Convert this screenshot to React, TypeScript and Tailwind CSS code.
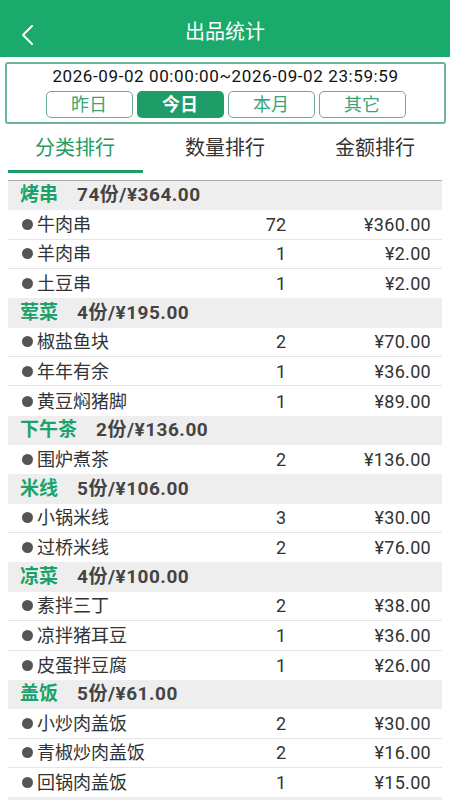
import React, { useState } from "react";

type Item = { name: string; qty: number; amount: string };
type Group = { name: string; count: number; total: string; items: Item[] };

const groups: Group[] = [
  {
    name: "烤串",
    count: 74,
    total: "364.00",
    items: [
      { name: "牛肉串", qty: 72, amount: "360.00" },
      { name: "羊肉串", qty: 1, amount: "2.00" },
      { name: "土豆串", qty: 1, amount: "2.00" },
    ],
  },
  {
    name: "荤菜",
    count: 4,
    total: "195.00",
    items: [
      { name: "椒盐鱼块", qty: 2, amount: "70.00" },
      { name: "年年有余", qty: 1, amount: "36.00" },
      { name: "黄豆焖猪脚", qty: 1, amount: "89.00" },
    ],
  },
  {
    name: "下午茶",
    count: 2,
    total: "136.00",
    items: [{ name: "围炉煮茶", qty: 2, amount: "136.00" }],
  },
  {
    name: "米线",
    count: 5,
    total: "106.00",
    items: [
      { name: "小锅米线", qty: 3, amount: "30.00" },
      { name: "过桥米线", qty: 2, amount: "76.00" },
    ],
  },
  {
    name: "凉菜",
    count: 4,
    total: "100.00",
    items: [
      { name: "素拌三丁", qty: 2, amount: "38.00" },
      { name: "凉拌猪耳豆", qty: 1, amount: "36.00" },
      { name: "皮蛋拌豆腐", qty: 1, amount: "26.00" },
    ],
  },
  {
    name: "盖饭",
    count: 5,
    total: "61.00",
    items: [
      { name: "小炒肉盖饭", qty: 2, amount: "30.00" },
      { name: "青椒炒肉盖饭", qty: 2, amount: "16.00" },
      { name: "回锅肉盖饭", qty: 1, amount: "15.00" },
    ],
  },
];

const ranges = ["昨日", "今日", "本月", "其它"];
const tabs = ["分类排行", "数量排行", "金额排行"];

export default function App() {
  const [range, setRange] = useState(1);
  const [tab, setTab] = useState(0);

  return (
    <div
      className="w-[450px] h-[800px] overflow-hidden bg-white flex flex-col"
      style={{ fontFamily: 'Roboto, "Noto Sans CJK SC", sans-serif' }}
    >
      {/* Header */}
      <div className="h-[57px] shrink-0 bg-[#19aa6c] flex items-center relative">
        <button className="absolute left-[16px] top-[21px] w-[22px] h-[28px] flex items-center justify-center">
          <svg width="16" height="22" viewBox="0 0 16 22" fill="none">
            <path d="M13 2 L4 11 L13 20" stroke="white" strokeWidth="2" strokeLinecap="round" strokeLinejoin="round" />
          </svg>
        </button>
        <div className="flex-1 text-center text-white text-[20px] pt-[7px]">出品统计</div>
      </div>

      {/* Date range */}
      <div className="mt-[5px] ml-[5px] mr-[4px] h-[62px] shrink-0 border-2 border-[#6cb597] rounded-[3px] flex flex-col items-center">
        <div className="text-[17px] leading-[20px] text-[#111] mt-[2px] tracking-[0.6px]">
          2026-09-02 00:00:00~2026-09-02 23:59:59
        </div>
        <div className="flex gap-[4px] mt-[5px]">
          {ranges.map((r, i) => (
            <button
              key={r}
              onClick={() => setRange(i)}
              className={
                i === range
                  ? "w-[87px] h-[27px] rounded-[5px] bg-[#1f9d68] text-white text-[18px] leading-[27px] font-bold"
                  : "w-[87px] h-[27px] rounded-[5px] border-[1.5px] border-[#68ad92] text-[#3aa479] text-[18px] leading-[24px]"
              }
            >
              {r}
            </button>
          ))}
        </div>
      </div>

      {/* Tabs */}
      <div className="h-[56px] shrink-0 flex">
        {tabs.map((t, i) => (
          <button
            key={t}
            onClick={() => setTab(i)}
            className="relative flex-1 flex items-center justify-center pb-[8px]"
          >
            <span className={i === tab ? "text-[20px] text-[#1d9c67]" : "text-[20px] text-[#333]"}>{t}</span>
            {i === tab && (
              <span className="absolute left-[8px] right-[7px] bottom-[7px] h-[3px] bg-[#1d9c67]" />
            )}
          </button>
        ))}
      </div>
      <div className="mx-[8px] h-px bg-[#aaaaaa] shrink-0" />

      {/* List */}
      <div className="mx-[8px] flex flex-col">
        {groups.map((g) => (
          <div key={g.name} className="flex flex-col">
            <div className="h-[29.35px] bg-[#eeeeee] flex items-center pl-[12px] text-[19px] font-bold">
              <span className="text-[#1aa26b] mr-[19px]">{g.name}</span>
              <span className="text-[#444] tracking-[0.5px]">
                {g.count}份/¥{g.total}
              </span>
            </div>
            {g.items.map((it, idx) => (
              <div
                key={it.name}
                className={
                  idx === g.items.length - 1
                    ? "h-[29.35px] flex items-center pl-[13px] pr-[11px] text-[18px] text-[#333]"
                    : "h-[29.35px] flex items-center pl-[13px] pr-[11px] text-[18px] text-[#333] border-b border-[#e6e6e6]"
                }
              >
                <span className="flex-1 flex items-center">
                  <span className="w-[11px] h-[11px] rounded-full bg-[#555] mr-[4px] ml-[1px]" />
                  {it.name}
                </span>
                <span className="w-[60px] text-right">{it.qty}</span>
                <span className="w-[145px] text-right tracking-[0.3px]">¥{it.amount}</span>
              </div>
            ))}
          </div>
        ))}
        <div className="h-[10px] bg-[#eeeeee]" />
      </div>
    </div>
  );
}
